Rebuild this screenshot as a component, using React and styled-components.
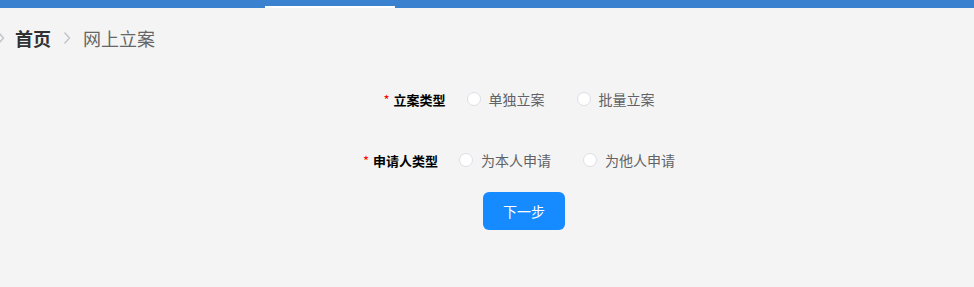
import React from "react";
import styled, { createGlobalStyle } from "styled-components";

const Global = createGlobalStyle`
  html, body { margin: 0; padding: 0; background: #f4f4f4; }
  body { font-family: "Noto Sans CJK SC", "Noto Sans", sans-serif; }
  #root { min-height: 287px; background: #f4f4f4; }
`;

const TopBar = styled.div`
  height: 8px;
  background: #3a81cf;
  display: flex;
  align-items: flex-end;
  padding-left: 265px;
`;

const TabIndicator = styled.div`
  width: 130px;
  height: 2px;
  background: #ffffff;
`;

const Breadcrumb = styled.nav`
  display: flex;
  align-items: center;
  height: 24px;
  margin: 18px 0 0 -3px;
`;

const Sep = styled.span`
  display: inline-flex;
  align-items: center;
  margin: ${(p) => p.$m || "0 12px"};
`;

const Crumb = styled.span`
  font-size: 18px;
  line-height: 24px;
  color: ${(p) => (p.$active ? "#303133" : "#666666")};
  font-weight: ${(p) => (p.$active ? 700 : 400)};
`;

const Form = styled.div`
  display: flex;
  flex-direction: column;
  align-items: center;
  padding-left: 64px;
  margin-top: 38px;
`;

const Row = styled.div`
  display: flex;
  align-items: center;
  height: 22px;
  margin-bottom: ${(p) => p.$mb || "0"};
`;

const Label = styled.label`
  display: flex;
  align-items: center;
  font-size: 13px;
  font-weight: 700;
  color: #000;
  margin-right: 21px;
`;

const Star = styled.span`
  color: #f00;
  font-weight: 400;
  margin-right: 4px;
  font-size: 13px;
`;

const Option = styled.span`
  display: flex;
  align-items: center;
  margin-right: ${(p) => (p.$last ? "0" : "32px")};
  font-size: 14px;
  color: #606266;
`;

const Circle = styled.span`
  width: 12px;
  height: 12px;
  border-radius: 50%;
  border: 1px solid #dcdfe6;
  background: #fff;
  margin-right: 8px;
`;

const Button = styled.button`
  width: 82px;
  height: 38px;
  border: none;
  border-radius: 6px;
  background: #168bff;
  color: #fff;
  font-family: inherit;
  font-size: 14px;
  margin-left: 10px;
  margin-top: 1px;
  cursor: pointer;
`;

const Chevron = () => (
  <svg width="8" height="14" viewBox="0 0 8 14" fill="none">
    <path d="M1.5 1.5 L6.5 7 L1.5 12.5" stroke="#c0c4cc" strokeWidth="1.4" />
  </svg>
);

export default function App() {
  return (
    <>
      <Global />
      <TopBar>
        <TabIndicator />
      </TopBar>
      <Breadcrumb>
        <Sep $m="0 10px 0 0">
          <Chevron />
        </Sep>
        <Crumb $active>首页</Crumb>
        <Sep>
          <Chevron />
        </Sep>
        <Crumb>网上立案</Crumb>
      </Breadcrumb>
      <Form>
        <Row $mb="39px">
          <Label>
            <Star>*</Star>立案类型
          </Label>
          <Option>
            <Circle />
            单独立案
          </Option>
          <Option $last>
            <Circle />
            批量立案
          </Option>
        </Row>
        <Row $mb="20px">
          <Label>
            <Star>*</Star>申请人类型
          </Label>
          <Option>
            <Circle />
            为本人申请
          </Option>
          <Option $last>
            <Circle />
            为他人申请
          </Option>
        </Row>
        <Button>下一步</Button>
      </Form>
    </>
  );
}
